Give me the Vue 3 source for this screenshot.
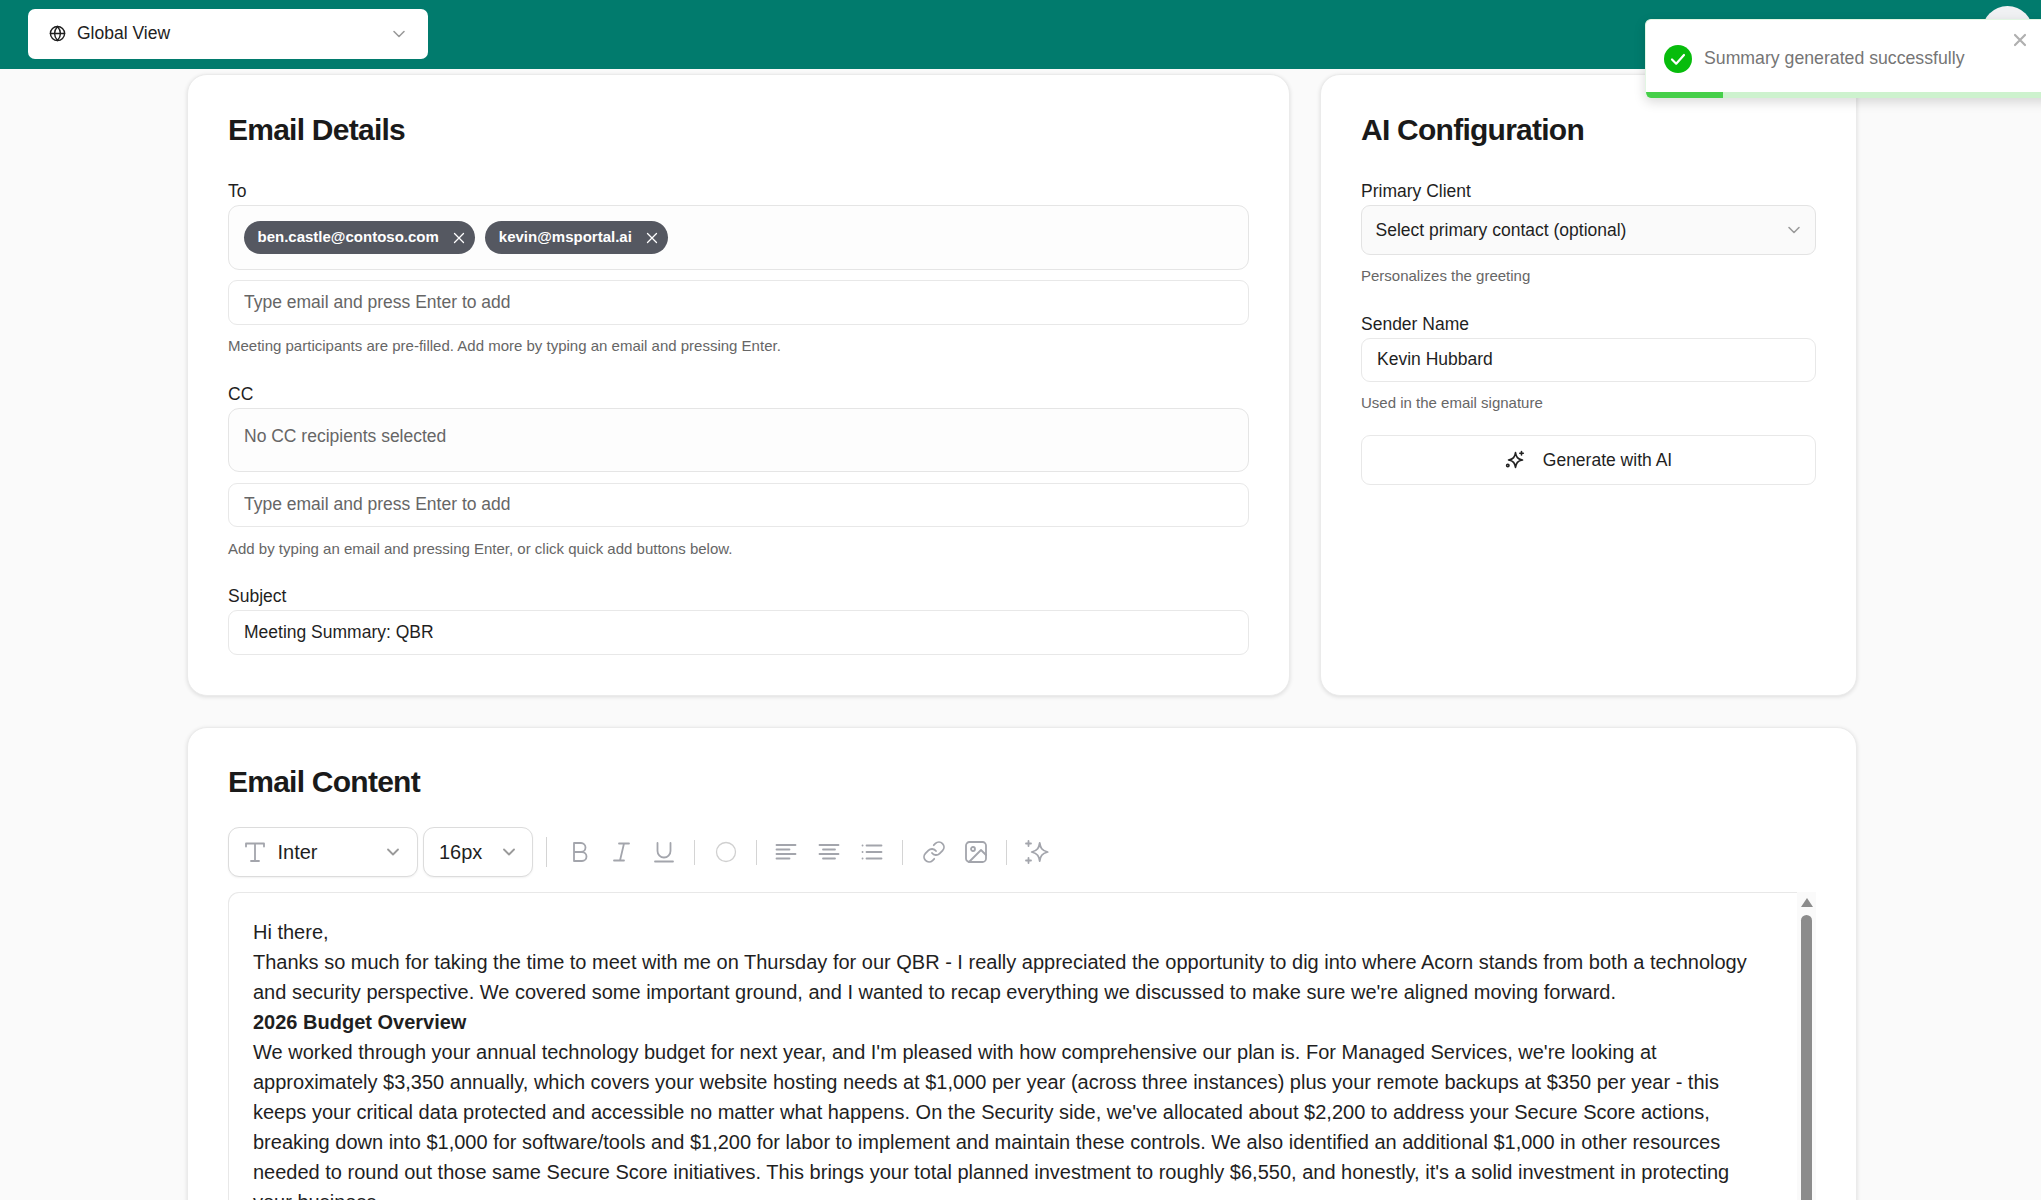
<script setup>
const chips = ['ben.castle@contoso.com', 'kevin@msportal.ai']
</script>

<template>
  <div class="page">
    <header class="topbar">
      <div class="scope">
        <svg class="globe" viewBox="0 0 24 24"><circle cx="12" cy="12" r="10"/><path d="M2 12h20M12 2c-5.500 6-5.500 14 0 20M12 2c5.500 6 5.500 14 0 20"/></svg>
        <span class="scope-name">Global View</span>
        <svg class="chev" viewBox="0 0 24 24"><path d="M6 9l6 6 6-6"/></svg>
      </div>
      <div class="avatar"></div>
    </header>

    <main class="content">
      <div class="top-grid">
        <section class="card">
          <h2>Email Details</h2>
          <div class="field">
            <label>To</label>
            <div class="recipients">
              <span v-for="c in chips" :key="c" class="chip">{{ c }}
                <svg viewBox="0 0 12 12"><path d="M1.500 1.500l9 9M10.500 1.500l-9 9"/></svg>
              </span>
            </div>
            <input class="input add" placeholder="Type email and press Enter to add" />
            <p class="hint">Meeting participants are pre-filled. Add more by typing an email and pressing Enter.</p>
          </div>
          <div class="field">
            <label>CC</label>
            <div class="recipients empty">No CC recipients selected</div>
            <input class="input add" placeholder="Type email and press Enter to add" />
            <p class="hint">Add by typing an email and pressing Enter, or click quick add buttons below.</p>
          </div>
          <div class="field last">
            <label>Subject</label>
            <input class="input" value="Meeting Summary: QBR" />
          </div>
        </section>

        <section class="card side">
          <h2>AI Configuration</h2>
          <div class="field">
            <label>Primary Client</label>
            <div class="select">
              <span>Select primary contact (optional)</span>
              <svg class="chev" viewBox="0 0 24 24"><path d="M6 9l6 6 6-6"/></svg>
            </div>
            <p class="hint">Personalizes the greeting</p>
          </div>
          <div class="field tight">
            <label>Sender Name</label>
            <input class="input" value="Kevin Hubbard" />
            <p class="hint">Used in the email signature</p>
          </div>
          <button class="generate">
            <svg viewBox="0 0 20 20"><path d="M10.500 2.500C11.200 7 12.500 9.200 17.500 10C12.500 10.800 11.200 13 10.500 17.500C9.800 13 8.500 10.800 3.500 10C8.500 9.200 9.800 7 10.500 2.500z"/><path d="M16.500 1.500v3.500M14.800 3.200h3.500"/><circle cx="2.800" cy="15.500" r="1.200"/></svg>
            Generate with AI
          </button>
        </section>
      </div>

      <section class="card content-card">
        <h2>Email Content</h2>
        <div class="toolbar">
          <div class="tool-select font">
            <svg class="t-icon" viewBox="0 0 24 24"><path d="M3 6.500V3.500h18V6.500M12 3.500V21M8 21h8"/></svg>
            <span>Inter</span>
            <svg class="chev" viewBox="0 0 24 24"><path d="M6 9l6 6 6-6"/></svg>
          </div>
          <div class="tool-select size">
            <span>16px</span>
            <svg class="chev" viewBox="0 0 24 24"><path d="M6 9l6 6 6-6"/></svg>
          </div>
          <i class="sep first"></i>
          <svg class="tool" viewBox="0 0 24 24"><path d="M6 3h7a4.500 4.500 0 0 1 0 9H6zM6 12h8a4.500 4.500 0 0 1 0 9H6z"/></svg>
          <svg class="tool" viewBox="0 0 24 24"><path d="M9 3.500h10M4 20.500h10M14 3.500l-4 17"/></svg>
          <svg class="tool" viewBox="0 0 24 24"><path d="M5.500 3v8a6.500 6.500 0 0 0 13 0V3M3 21.500h18"/></svg>
          <i class="sep"></i>
          <svg class="tool pale" viewBox="0 0 24 24"><circle cx="12" cy="12" r="9.500"/></svg>
          <i class="sep"></i>
          <svg class="tool" viewBox="0 0 24 24"><path d="M.5 5h19M.5 9.500h13M.5 14h19M.5 18.500h13"/></svg>
          <svg class="tool" viewBox="0 0 24 24"><path d="M1.500 5h19M5 9.500h12M1.500 14h19M5 18.500h12"/></svg>
          <svg class="tool" viewBox="0 0 24 24"><path d="M6.500 5.500h15M6.500 12h15M6.500 18.500h15M2.500 5.500h.1M2.500 12h.1M2.500 18.500h.1"/></svg>
          <i class="sep"></i>
          <svg class="tool" viewBox="0 0 24 24"><path d="M10 13a5 5 0 0 0 7.540.54l3-3a5 5 0 0 0-7.070-7.070l-1.720 1.710M14 11a5 5 0 0 0-7.540-.54l-3 3a5 5 0 0 0 7.070 7.070l1.710-1.710"/></svg>
          <svg class="tool" viewBox="0 0 24 24"><rect x="2" y="2" width="20" height="20" rx="3.500"/><circle cx="9" cy="9" r="2"/><path d="M22 15l-5-5L5 22"/></svg>
          <i class="sep"></i>
          <svg class="tool" viewBox="0 0 24 24"><path d="M13.700 3C14.500 8 15.700 10.500 21.700 12C15.700 13.500 14.500 16 13.700 21C12.900 16 11.700 13.500 5.700 12C11.700 10.500 12.900 8 13.700 3zM2.500 1v5M0 3.500h5M2.500 18v5M0 20.500h5"/></svg>
        </div>
        <div class="editor">
          <div class="editor-text">
            <p>Hi there,</p>
            <p>Thanks so much for taking the time to meet with me on Thursday for our QBR - I really appreciated the opportunity to dig into where Acorn stands from both a technology and security perspective. We covered some important ground, and I wanted to recap everything we discussed to make sure we're aligned moving forward.</p>
            <p><strong>2026 Budget Overview</strong></p>
            <p>We worked through your annual technology budget for next year, and I'm pleased with how comprehensive our plan is. For Managed Services, we're looking at approximately $3,350 annually, which covers your website hosting needs at $1,000 per year (across three instances) plus your remote backups at $350 per year - this keeps your critical data protected and accessible no matter what happens. On the Security side, we've allocated about $2,200 to address your Secure Score actions, breaking down into $1,000 for software/tools and $1,200 for labor to implement and maintain these controls. We also identified an additional $1,000 in other resources needed to round out those same Secure Score initiatives. This brings your total planned investment to roughly $6,550, and honestly, it's a solid investment in protecting your business.</p>
          </div>
          <div class="scrollbar">
            <span class="arrow"></span>
            <span class="thumb"></span>
          </div>
        </div>
      </section>
    </main>

    <aside class="toast">
      <span class="ok"><svg viewBox="0 0 28 28"><path d="M8 14.500l4.200 4.200L20 10"/></svg></span>
      <span class="toast-text">Summary generated successfully</span>
      <svg class="toast-close" viewBox="0 0 14 14"><path d="M2 2l10 10M12 2L2 12"/></svg>
      <div class="progress"><div class="progress-fill"></div></div>
    </aside>
  </div>
</template>

<style>
html, body { margin: 0; height: 100%; overflow: hidden; background: #fafafa; }
</style>

<style scoped>
.page {
  position: relative;
  height: 1200px;
  overflow: hidden;
  background: #fafafa;
  color: #1a1a1a;
  font-family: "Liberation Sans", Arial, sans-serif;
}
svg { fill: none; stroke: currentColor; stroke-linecap: round; stroke-linejoin: round; stroke-width: 2; flex: none; }

.topbar {
  height: 69px;
  background: #017b6d;
  display: flex;
  align-items: flex-start;
  justify-content: space-between;
  padding: 9px 8px 0 28px;
  box-sizing: border-box;
}
.scope {
  width: 400px;
  height: 50px;
  box-sizing: border-box;
  background: #fff;
  border-radius: 7px;
  display: flex;
  align-items: center;
  padding: 0 19.500px 2px 21px;
  font-size: 17.500px;
  color: #222;
}
.globe { width: 17px; height: 17px; margin-right: 11px; color: #1f1f1f; stroke-width: 2; }
.scope-name { flex: 1; }
.chev { width: 20px; height: 20px; color: #9a9a9a; stroke-width: 1.900; }
.scope .chev { margin-top: 2px; }
.avatar { width: 51px; height: 51px; margin-top: -3px; border-radius: 50%; background: #f0f1f3; }

.content { width: 1670px; margin: 5px 0 0 187px; }
.top-grid { display: grid; grid-template-columns: 1103px 537px; gap: 30px; margin-bottom: 31px; }
.card {
  box-sizing: border-box;
  background: #fff;
  border: 1px solid #ebebeb;
  border-radius: 20px;
  box-shadow: 0 1px 4px rgba(0, 0, 0, .12);
  padding: 39px 40px 41px;
  height: 622px;
}
.content-card { height: auto; min-height: 600px; padding-top: 38px; }
h2 { margin: 0 0 34px; font-size: 30px; line-height: 32px; font-weight: 700; letter-spacing: -.75px; color: #1a1a1a; }
.content-card h2 { margin-bottom: 29px; }
.field { margin-bottom: 28.600px; }
.field.tight { margin-bottom: 24px; }
.field.last { margin-bottom: 0; }
label { display: block; font-size: 17.500px; line-height: 23px; margin-bottom: 2px; color: #1f1f1f; }
.recipients {
  box-sizing: border-box;
  height: 64.500px;
  border: 1px solid #e5e5e5;
  border-radius: 11px;
  background: #fdfdfd;
  padding: 15px;
  display: flex;
  gap: 10.500px;
  margin-bottom: 10.500px;
}
.recipients.empty { font-size: 17.500px; line-height: 26px; padding-top: 14px; color: #666; }
.chip {
  height: 33px;
  box-sizing: border-box;
  border-radius: 17px;
  background: #555861;
  color: #fff;
  display: inline-flex;
  align-items: center;
  gap: 14px;
  padding: 0 10px 2px 13.500px;
  font-size: 15px;
  font-weight: 700;
}
.chip svg { width: 12px; height: 12px; stroke-width: 1.300; margin-top: 2px; }
.input {
  display: block;
  width: 100%;
  height: 44.500px;
  box-sizing: border-box;
  border: 1px solid #e8e8e8;
  border-radius: 9px;
  background: #fff;
  padding: 0 15px;
  font: 17.500px "Liberation Sans", Arial, sans-serif;
  color: #1f1f1f;
  outline: none;
}
.input::placeholder { color: #666; opacity: 1; }
.hint { margin: 12.500px 0 0; font-size: 15px; line-height: 17px; color: #666; }
.side .hint { margin-top: 12px; margin-bottom: 1px; }
.select {
  box-sizing: border-box;
  height: 50px;
  border: 1px solid #e3e3e3;
  border-radius: 9px;
  background: #fafafa;
  display: flex;
  align-items: center;
  justify-content: space-between;
  padding: 0 11px 0 13.500px;
  font-size: 17.500px;
  color: #1f1f1f;
}
.generate {
  width: 100%;
  height: 50px;
  box-sizing: border-box;
  border: 1px solid #e8e8e8;
  border-radius: 9px;
  background: #fff;
  font: 17.500px "Liberation Sans", Arial, sans-serif;
  color: #1f1f1f;
  display: flex;
  align-items: center;
  justify-content: center;
  gap: 18px;
}
.generate svg { width: 20px; height: 20px; color: #222; stroke-width: 1.600; }

.toolbar { display: flex; align-items: center; margin-bottom: 15px; }
.tool-select {
  box-sizing: border-box;
  height: 50px;
  border: 1px solid #dcdcdc;
  border-radius: 11px;
  background: #fff;
  display: flex;
  align-items: center;
  font-size: 20px;
  color: #1f1f1f;
  box-shadow: 0 1px 2px rgba(0, 0, 0, .06);
}
.tool-select .chev { stroke-width: 2.200; }
.tool-select.font { width: 189.500px; padding: 0 13.500px 0 14px; margin-right: 5.500px; }
.tool-select.font span { flex: 1; }
.tool-select.size { width: 109.500px; padding: 0 13px 0 15px; justify-content: space-between; }
.t-icon { width: 24px; height: 24px; color: #a3a5ac; margin-right: 10.500px; stroke-width: 1.800; }
.sep { display: block; width: 1px; height: 25px; background: #d4d4d4; margin: 0 9.500px; }
.sep.first { height: 30px; margin: 0 11.500px 0 13.500px; }
.tool { width: 24px; height: 24px; color: #a3a5ac; margin: 0 9px; stroke-width: 1.800; overflow: visible; }
.tool.pale { color: #d0d0d0; stroke-width: 1.300; }

.editor {
  position: relative;
  display: flex;
  height: 900px;
  border-left: 1px solid #e8e8e8;
  border-top: 1px solid #e8e8e8;
  border-radius: 11px 0 0 0;
}
.editor-text { flex: 1; padding: 24px 24px 0 24px; font-size: 20px; line-height: 30px; color: #1f1f1f; }
.editor-text p { margin: 0; }
.scrollbar {
  width: 19px;
  background: #fafafa;
  margin-top: -1px;
  display: flex;
  flex-direction: column;
  align-items: center;
}
.arrow {
  margin-top: 6px;
  width: 0;
  height: 0;
  border-left: 6.500px solid transparent;
  border-right: 6.500px solid transparent;
  border-bottom: 9px solid #8c8c8c;
}
.thumb { margin-top: 8px; width: 11px; flex: 1; border-radius: 6px 6px 0 0; background: #8c8c8c; }

.toast {
  position: absolute;
  left: 1645px;
  top: 19px;
  width: 420px;
  height: 79px;
  box-sizing: border-box;
  background: #fff;
  border: 1px solid #e2f6e3;
  border-bottom: 0;
  border-radius: 6px;
  box-shadow: 0 4px 12px rgba(0, 0, 0, .15);
  display: flex;
  align-items: flex-start;
  padding: 25px 0 0 18px;
  overflow: hidden;
}
.ok { width: 28px; height: 28px; border-radius: 50%; background: #07bc0c; flex: none; }
.ok svg { display: block; width: 28px; height: 28px; color: #fff; stroke-width: 2.200; }
.toast-text { margin-left: 12px; font-size: 17.700px; line-height: 26px; color: #757575; }
.toast-close { position: absolute; left: 367px; top: 13px; width: 14px; height: 14px; color: #b0b0b0; stroke-width: 2.200; }
.progress { position: absolute; left: 0; right: 0; bottom: 0; height: 6px; background: #cdf2ce; }
.progress-fill { width: 77px; height: 100%; background: #45cf49; }
</style>
